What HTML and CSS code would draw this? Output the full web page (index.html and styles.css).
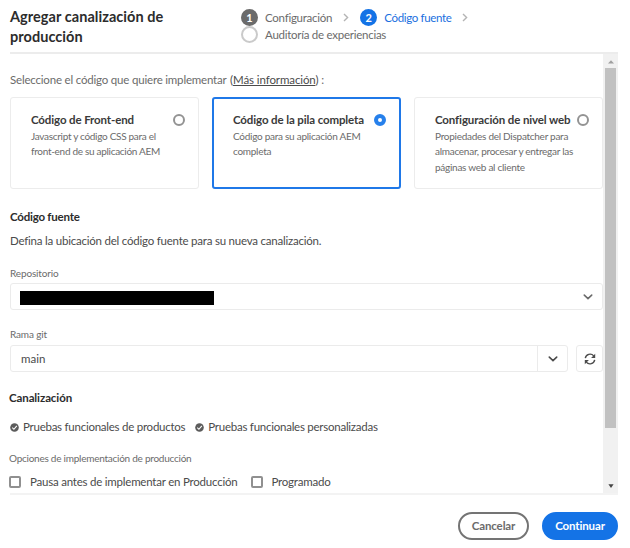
FILE: index.html
```
<!DOCTYPE html>
<html lang="es">
<head>
<meta charset="utf-8">
<title>Agregar canalización de producción</title>
<link rel="stylesheet" href="styles.css">
</head>
<body>
<div class="dialog">
  <header class="header">
    <h1 class="title">Agregar canalización de producción</h1>
    <div class="steps">
      <div class="step"><span class="dot done">1</span><span>Configuración</span>
        <svg class="sep" viewBox="0 0 6 9"><path d="M1 1l3.6 3.5L1 8"/></svg></div>
      <div class="step current"><span class="dot active">2</span><span>Código fuente</span>
        <svg class="sep" viewBox="0 0 6 9"><path d="M1 1l3.6 3.5L1 8"/></svg></div>
      <div class="step"><span class="dot"></span><span>Auditoría de experiencias</span></div>
    </div>
  </header>
  <div class="viewport">
    <main class="content">
      <p class="intro">Seleccione el código que quiere implementar <a class="more">(<u>Más información</u>)</a> :</p>
      <div class="cards">
        <div class="card"><h2>Código de Front-end</h2><p>Javascript y código CSS para el front-end de su aplicación AEM</p><span class="radio"></span></div>
        <div class="card selected"><h2>Código de la pila completa</h2><p>Código para su aplicación AEM completa</p><span class="radio"></span></div>
        <div class="card"><h2>Configuración de nivel web</h2><p>Propiedades del Dispatcher para almacenar, procesar y entregar las páginas web al cliente</p><span class="radio"></span></div>
      </div>
      <h3 class="section">Código fuente</h3>
      <p class="lead">Defina la ubicación del código fuente para su nueva canalización.</p>
      <label class="label">Repositorio</label>
      <div class="field repo"><span class="redacted"></span>
        <svg class="chev" viewBox="0 0 10 6"><path d="M1.3 1.1L5 4.6l3.7-3.5"/></svg></div>
      <label class="label branch-label">Rama git</label>
      <div class="branch">
        <div class="field combo"><span class="value">main</span><span class="drop"><svg class="chev" viewBox="0 0 10 6"><path d="M1.3 1.1L5 4.6l3.7-3.5"/></svg></span></div>
        <div class="field refresh"><svg viewBox="0 0 12 12"><path class="arc" d="M1.3 5.2A4.8 4.8 0 0 1 9.7 2.9M10.7 6.8A4.8 4.8 0 0 1 2.3 9.1"/><path class="tip" d="M11.2.8v4.1H7.1zM.8 11.2V7.1h4.1z"/></svg></div>
      </div>
      <h3 class="section pipeline">Canalización</h3>
      <div class="tests">
        <span class="test"><svg viewBox="0 0 9 9"><circle cx="4.5" cy="4.5" r="4.3"/><path d="M2.3 4.7l1.6 1.6 2.9-3.5"/></svg>Pruebas funcionales de productos</span>
        <span class="test"><svg viewBox="0 0 9 9"><circle cx="4.5" cy="4.5" r="4.3"/><path d="M2.3 4.7l1.6 1.6 2.9-3.5"/></svg>Pruebas funcionales personalizadas</span>
      </div>
      <div class="options-label">Opciones de implementación de producción</div>
      <div class="options">
        <span class="option"><i class="box"></i>Pausa antes de implementar en Producción</span>
        <span class="option"><i class="box"></i>Programado</span>
      </div>
    </main>
    <div class="scrollbar">
      <svg class="arrow up" viewBox="0 0 6 4"><path d="M0 3.5L3 .3l3 3.2z"/></svg>
      <div class="thumb"></div>
      <svg class="arrow down" viewBox="0 0 6 4"><path d="M.4.2L3 3.9 5.6.2z"/></svg>
    </div>
  </div>
  <footer class="footer">
    <button class="btn">Cancelar</button>
    <button class="btn primary">Continuar</button>
  </footer>
</div>
</body>
</html>
```
FILE: styles.css
```
* { box-sizing: border-box; }
body {
  margin: 0;
  background: #fff;
  color: #4b4b4b;
  font: 11.5px/16px Lato, "Noto Sans", sans-serif;
  letter-spacing: -0.22px;
  white-space: nowrap;
}
h1, h2, h3, p { margin: 0; }
svg { display: block; fill: none; }
.dialog { width: 618px; height: 548px; padding-left: 10px; display: flex; flex-direction: column; }

.header { height: 54px; flex: none; display: flex; border-bottom: 2px solid #ececec; }
.title { width: 231px; padding: 7px 60px 0 0; font-size: 14.5px; line-height: 19.5px; font-weight: 700; color: #2c2c2c; white-space: normal; letter-spacing: 0.05px; }
.steps { flex: 1; padding-top: 9px; display: flex; flex-wrap: wrap; align-content: flex-start; color: #6b6b6b; letter-spacing: -0.26px; }
.step { display: flex; align-items: center; height: 17px; }
.dot { width: 17px; height: 17px; margin-right: 7px; border-radius: 50%; border: 2px solid #cacaca; }
.done, .active { border: 0; color: #fff; font-weight: 700; font-size: 11px; line-height: 17px; text-align: center; letter-spacing: 0; }
.done { background: #6b6b6b; }
.active { background: #1473e6; }
.current { color: #1a6fe0; letter-spacing: -0.34px; }
.sep { width: 6px; height: 9px; margin: 0 11.5px 0 10.5px; stroke: #b4b4b4; stroke-width: 1.4; }

.viewport { height: 441px; flex: none; display: flex; border-bottom: 2px solid #f3f3f3; }
.content { width: 593px; }
.intro { margin-top: 18px; color: #6b6b6b; letter-spacing: -0.19px; }
.more { color: #4b4b4b; margin-left: 1px; letter-spacing: -0.1px; }
.cards { margin-top: 9px; display: grid; grid-template-columns: repeat(3, 189px); gap: 13px; height: 92px; }
.card { position: relative; border: 1px solid #ececec; border-radius: 3px; padding: 13px 20px; }
.card h2 { font-size: 11.5px; line-height: 17px; font-weight: 700; color: #3a3a3a; letter-spacing: -0.12px; }
.card p { margin-top: 1px; font-size: 10px; line-height: 15.3px; color: #6b6b6b; white-space: normal; letter-spacing: -0.27px; }
.card:first-child p { letter-spacing: -0.3px; }
.card.selected { border: 2px solid #1f78e8; padding: 12px 19px; }
.radio { position: absolute; right: 13px; top: 16px; width: 12px; height: 12px; border: 2px solid #939393; border-radius: 50%; background: #fff; }
.selected .radio { top: 15px; border: 4px solid #2680eb; }

.section { margin-top: 20px; font-size: 11.5px; line-height: 16px; font-weight: 700; color: #2c2c2c; }
.lead { margin-top: 8px; }
.label { display: block; margin-top: 17px; font-size: 10px; line-height: 15px; color: #6b6b6b; letter-spacing: -0.15px; }
.field { height: 27px; border: 1px solid #ebebeb; border-radius: 3px; display: flex; align-items: center; }
.repo { margin-top: 2px; justify-content: space-between; padding: 0 9px 0 8.5px; }
.redacted { width: 194px; height: 14px; background: #000; margin-top: 2px; }
.chev { width: 10px; height: 6px; stroke: #4b4b4b; stroke-width: 1.6; stroke-linecap: round; }
.repo .chev { stroke: #6b6b6b; }
.branch-label { margin-top: 17px; }
.branch { margin-top: 3px; display: flex; gap: 8px; }
.combo { width: 558px; }
.value { flex: 1; padding-left: 10px; letter-spacing: 0; }
.drop { width: 30px; height: 25px; border-left: 1px solid #ebebeb; display: flex; align-items: center; justify-content: center; }
.refresh { width: 27px; justify-content: center; }
.refresh svg { width: 12px; height: 12px; }
.arc { stroke: #4b4b4b; stroke-width: 1.4; }
.tip { fill: #4b4b4b; }
.pipeline { margin: 18px 0 0 -1px; letter-spacing: -0.1px; }
.tests { margin-top: 13px; display: flex; gap: 10px; letter-spacing: -0.25px; }
.test { display: flex; align-items: center; gap: 4px; }
.test svg { width: 9px; height: 9px; }
.test circle { fill: #5c5c5c; }
.test path { stroke: #fff; stroke-width: 1.1; }
.options-label { margin: 15px 0 0 -1px; font-size: 10px; color: #6b6b6b; letter-spacing: -0.25px; }
.options { margin: 8px 0 0 -1px; display: flex; gap: 13px; }
.option { display: flex; align-items: center; }
.box { width: 12px; height: 12px; margin-right: 9px; border: 2px solid #909090; border-radius: 2px; }
.option + .option .box { margin: 0 8px 0 1px; }

.scrollbar { width: 15px; background: #f1f1f1; display: flex; flex-direction: column; align-items: center; padding: 6px 0 5px; }
.arrow { width: 6px; height: 4px; flex: none; }
.up { fill: #a0a0a0; margin-bottom: 4px; }
.down { fill: #444; margin-top: auto; }
.thumb { width: 11px; height: 360px; background: #c1c1c1; }

.footer { display: flex; justify-content: flex-end; gap: 13px; padding-top: 17px; }
.btn { height: 28px; width: 71px; padding: 0; border: 2px solid #747474; border-radius: 14px; background: #fff; color: #6b6b6b; font: inherit; font-weight: 700; letter-spacing: -0.12px; }
.primary { width: 76px; background: #1473e6; border-color: #1473e6; color: #fff; }
```
